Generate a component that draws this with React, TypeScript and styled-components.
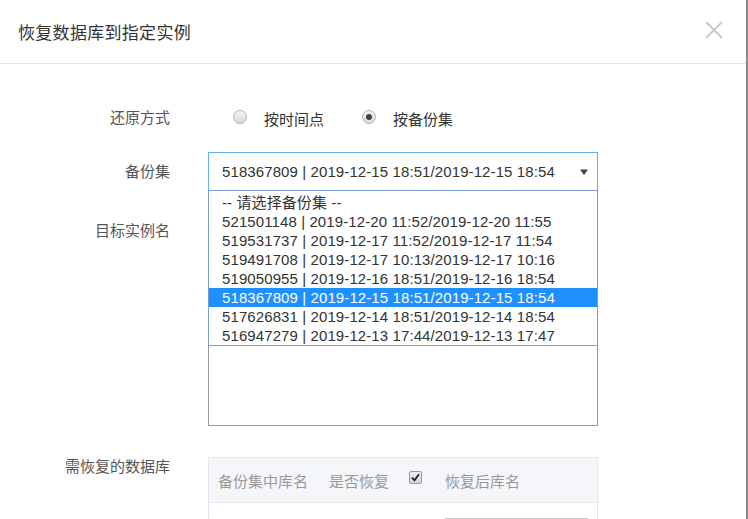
import React from "react";
import styled, { createGlobalStyle } from "styled-components";

const GlobalStyle = createGlobalStyle`
  html, body {
    margin: 0;
    padding: 0;
    background: #fff;
  }
  body {
    font-family: "Liberation Sans", "Noto Sans CJK SC", sans-serif;
    font-size: 15px;
    color: #333;
  }
`;

const backupSets = [
  "521501148 | 2019-12-20 11:52/2019-12-20 11:55",
  "519531737 | 2019-12-17 11:52/2019-12-17 11:54",
  "519491708 | 2019-12-17 10:13/2019-12-17 10:16",
  "519050955 | 2019-12-16 18:51/2019-12-16 18:54",
  "518367809 | 2019-12-15 18:51/2019-12-15 18:54",
  "517626831 | 2019-12-14 18:51/2019-12-14 18:54",
  "516947279 | 2019-12-13 17:44/2019-12-13 17:47",
];

const Page = styled.div`
  width: 748px;
  height: 519px;
  overflow: hidden;
  box-sizing: border-box;
  border-right: 2px solid #8a8a8a;
`;

const Header = styled.header`
  height: 63px;
  border-bottom: 1px solid #e5e5e5;
  display: flex;
  align-items: center;
  justify-content: space-between;
  padding: 0 22px 0 18px;
`;

const Title = styled.h4`
  margin: 0;
  font-size: 17px;
  font-weight: normal;
  letter-spacing: 0.3px;
  color: #333;
`;

const Close = styled.button`
  border: 0;
  background: none;
  padding: 0;
  width: 20px;
  height: 20px;
  margin-top: -4px;
  cursor: pointer;
`;

const Body = styled.div`
  padding-top: 39px;
  display: flex;
  flex-direction: column;
`;

const Row = styled.div<{ $mt?: number; $align?: string }>`
  display: grid;
  grid-template-columns: 170px 390px;
  column-gap: 38px;
  align-items: ${({ $align }) => $align || "center"};
  margin-top: ${({ $mt }) => $mt || 0}px;
`;

const Label = styled.label<{ $pt?: number }>`
  text-align: right;
  color: #555;
  line-height: 20px;
  padding-top: ${({ $pt }) => $pt || 0}px;
`;

const RadioGroup = styled.div`
  height: 30px;
  display: flex;
  align-items: center;
  padding-left: 25px;
`;

const RadioItem = styled.span`
  display: flex;
  align-items: center;
  margin-right: 38px;
  color: #333;
`;

const RadioDot = styled.span<{ $checked?: boolean }>`
  width: 14px;
  height: 14px;
  box-sizing: border-box;
  border-radius: 50%;
  border: 1px solid #b4b4b4;
  background: linear-gradient(#f4f4f4, #d8d8d8);
  margin-right: 17px;
  margin-top: -2px;
  display: flex;
  align-items: center;
  justify-content: center;
  &::after {
    content: "";
    display: ${({ $checked }) => ($checked ? "block" : "none")};
    width: 6px;
    height: 6px;
    border-radius: 50%;
    background: #444;
  }
`;

const SelectWrap = styled.div`
  position: relative;
  letter-spacing: 0.1px;
`;

const SelectBox = styled.div`
  height: 39px;
  box-sizing: border-box;
  border: 1px solid #66afe9;
  display: flex;
  align-items: center;
  justify-content: space-between;
  padding: 0 8px 0 13px;
  color: #333;
`;

const Options = styled.ul`
  position: absolute;
  z-index: 2;
  top: 38px;
  left: 0;
  width: 390px;
  box-sizing: border-box;
  margin: 0;
  padding: 2px 0 0;
  list-style: none;
  background: #fff;
  border: 1px solid #7c9cd0;
`;

const Option = styled.li<{ $active?: boolean }>`
  height: 19px;
  line-height: 19px;
  padding-left: 13px;
  white-space: nowrap;
  color: ${({ $active }) => ($active ? "#fff" : "#333")};
  background: ${({ $active }) => ($active ? "#1e90ff" : "transparent")};
`;

const InstanceBox = styled.div`
  height: 214px;
  box-sizing: border-box;
  border: 1px solid #999;
  background: #fff;
`;

const Table = styled.div`
  border: 1px solid #e4e6eb;
  border-bottom: 0;
  height: 80px;
`;

const TableHead = styled.div`
  height: 44px;
  background: #f5f6fa;
  border-bottom: 1px solid #e4e6eb;
  display: flex;
  align-items: center;
  padding-left: 9px;
  color: #999;
`;

const HeadCell = styled.span<{ $w?: number }>`
  width: ${({ $w }) => ($w ? `${$w}px` : "auto")};
  flex: none;
  white-space: nowrap;
`;

const Check = styled.span`
  width: 13px;
  height: 13px;
  box-sizing: border-box;
  border: 1px solid #9a9a9a;
  border-radius: 2px;
  background: linear-gradient(#eee, #d4d4d4);
  margin: -6px 23px 0 20px;
  display: flex;
  align-items: center;
  justify-content: center;
`;

const TableBody = styled.div`
  padding: 15px 0 0 236px;
`;

const NameInput = styled.div`
  width: 143px;
  height: 30px;
  border-top: 1px solid #c8c8c8;
`;

export default function App() {
  return (
    <Page>
      <GlobalStyle />
      <Header>
        <Title>恢复数据库到指定实例</Title>
        <Close aria-label="close">
          <svg width="20" height="20" viewBox="0 0 20 20">
            <path d="M2 2L18 18M18 2L2 18" stroke="#c8c8c8" strokeWidth="1.8" fill="none" />
          </svg>
        </Close>
      </Header>
      <Body>
        <Row>
          <Label>还原方式</Label>
          <RadioGroup>
            <RadioItem>
              <RadioDot />
              按时间点
            </RadioItem>
            <RadioItem>
              <RadioDot $checked />
              按备份集
            </RadioItem>
          </RadioGroup>
        </Row>
        <Row $mt={19}>
          <Label>备份集</Label>
          <SelectWrap>
            <SelectBox>
              <span>{backupSets[4]}</span>
              <svg width="10" height="8" viewBox="0 0 10 8">
                <path d="M1 1.5H9L5 7Z" fill="#444" />
              </svg>
            </SelectBox>
            <Options>
              <Option>-- 请选择备份集 --</Option>
              {backupSets.map((s, i) => (
                <Option key={s} $active={i === 4}>
                  {s}
                </Option>
              ))}
            </Options>
          </SelectWrap>
        </Row>
        <Row $mt={21} $align="start">
          <Label $pt={9}>目标实例名</Label>
          <InstanceBox />
        </Row>
        <Row $mt={31} $align="start">
          <Label>需恢复的数据库</Label>
          <Table>
            <TableHead>
              <HeadCell $w={111}>备份集中库名</HeadCell>
              <HeadCell>是否恢复</HeadCell>
              <Check>
                <svg width="9" height="9" viewBox="0 0 9 9">
                  <path d="M1 4.6L3.5 7.4L8 1.2" stroke="#222" strokeWidth="1.8" fill="none" />
                </svg>
              </Check>
              <HeadCell>恢复后库名</HeadCell>
            </TableHead>
            <TableBody>
              <NameInput />
            </TableBody>
          </Table>
        </Row>
      </Body>
    </Page>
  );
}
